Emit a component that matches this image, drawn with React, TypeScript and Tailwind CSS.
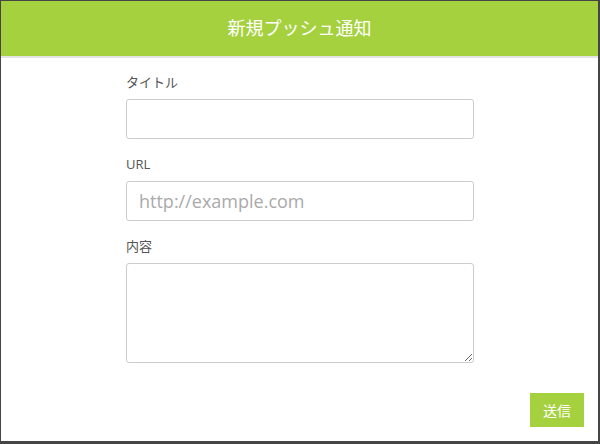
import React from "react";

const jp = { fontFamily: '"Open Sans", "Noto Sans CJK JP", sans-serif' };

export default function App() {
  return (
    <div className="w-[600px] h-[444px] bg-[#454545] pt-px pl-px overflow-hidden" style={jp}>
      <div className="w-[597px] h-[440px] bg-white flex flex-col">
        {/* header */}
        <div className="h-[57px] shrink-0 bg-[#a5d13f] border-b-2 border-[#e4e4e4] flex items-center justify-center">
          <h1 className="text-[18px] text-white leading-none -mt-[2px]">新規プッシュ通知</h1>
        </div>

        <form className="ml-[125px] w-[348px] pt-[14px] flex flex-col">
          <label className="text-[13px] leading-5 text-[#555]">タイトル</label>
          <input
            type="text"
            className="mt-[7px] h-10 w-full border border-[#ccc] rounded-[3px] px-3 text-[18px] outline-none"
          />

          <label className="mt-[15px] text-[13px] leading-5 text-[#555]">URL</label>
          <input
            type="text"
            placeholder="http://example.com"
            className="mt-[7px] h-10 w-full border border-[#ccc] rounded-[3px] px-3 text-[18px] text-[#333] placeholder:text-[#aaa] outline-none"
          />

          <label className="mt-[15px] text-[13px] leading-5 text-[#555]">内容</label>
          <textarea className="mt-[7px] h-[100px] w-full border border-[#ccc] rounded-[3px] px-3 py-2 text-[14px] outline-none" />
        </form>

        <div className="flex justify-end pr-[14px] mt-[30px]">
          <button className="w-[54px] h-[34px] bg-[#a5d13f] text-white text-[14px]">送信</button>
        </div>
      </div>
    </div>
  );
}
